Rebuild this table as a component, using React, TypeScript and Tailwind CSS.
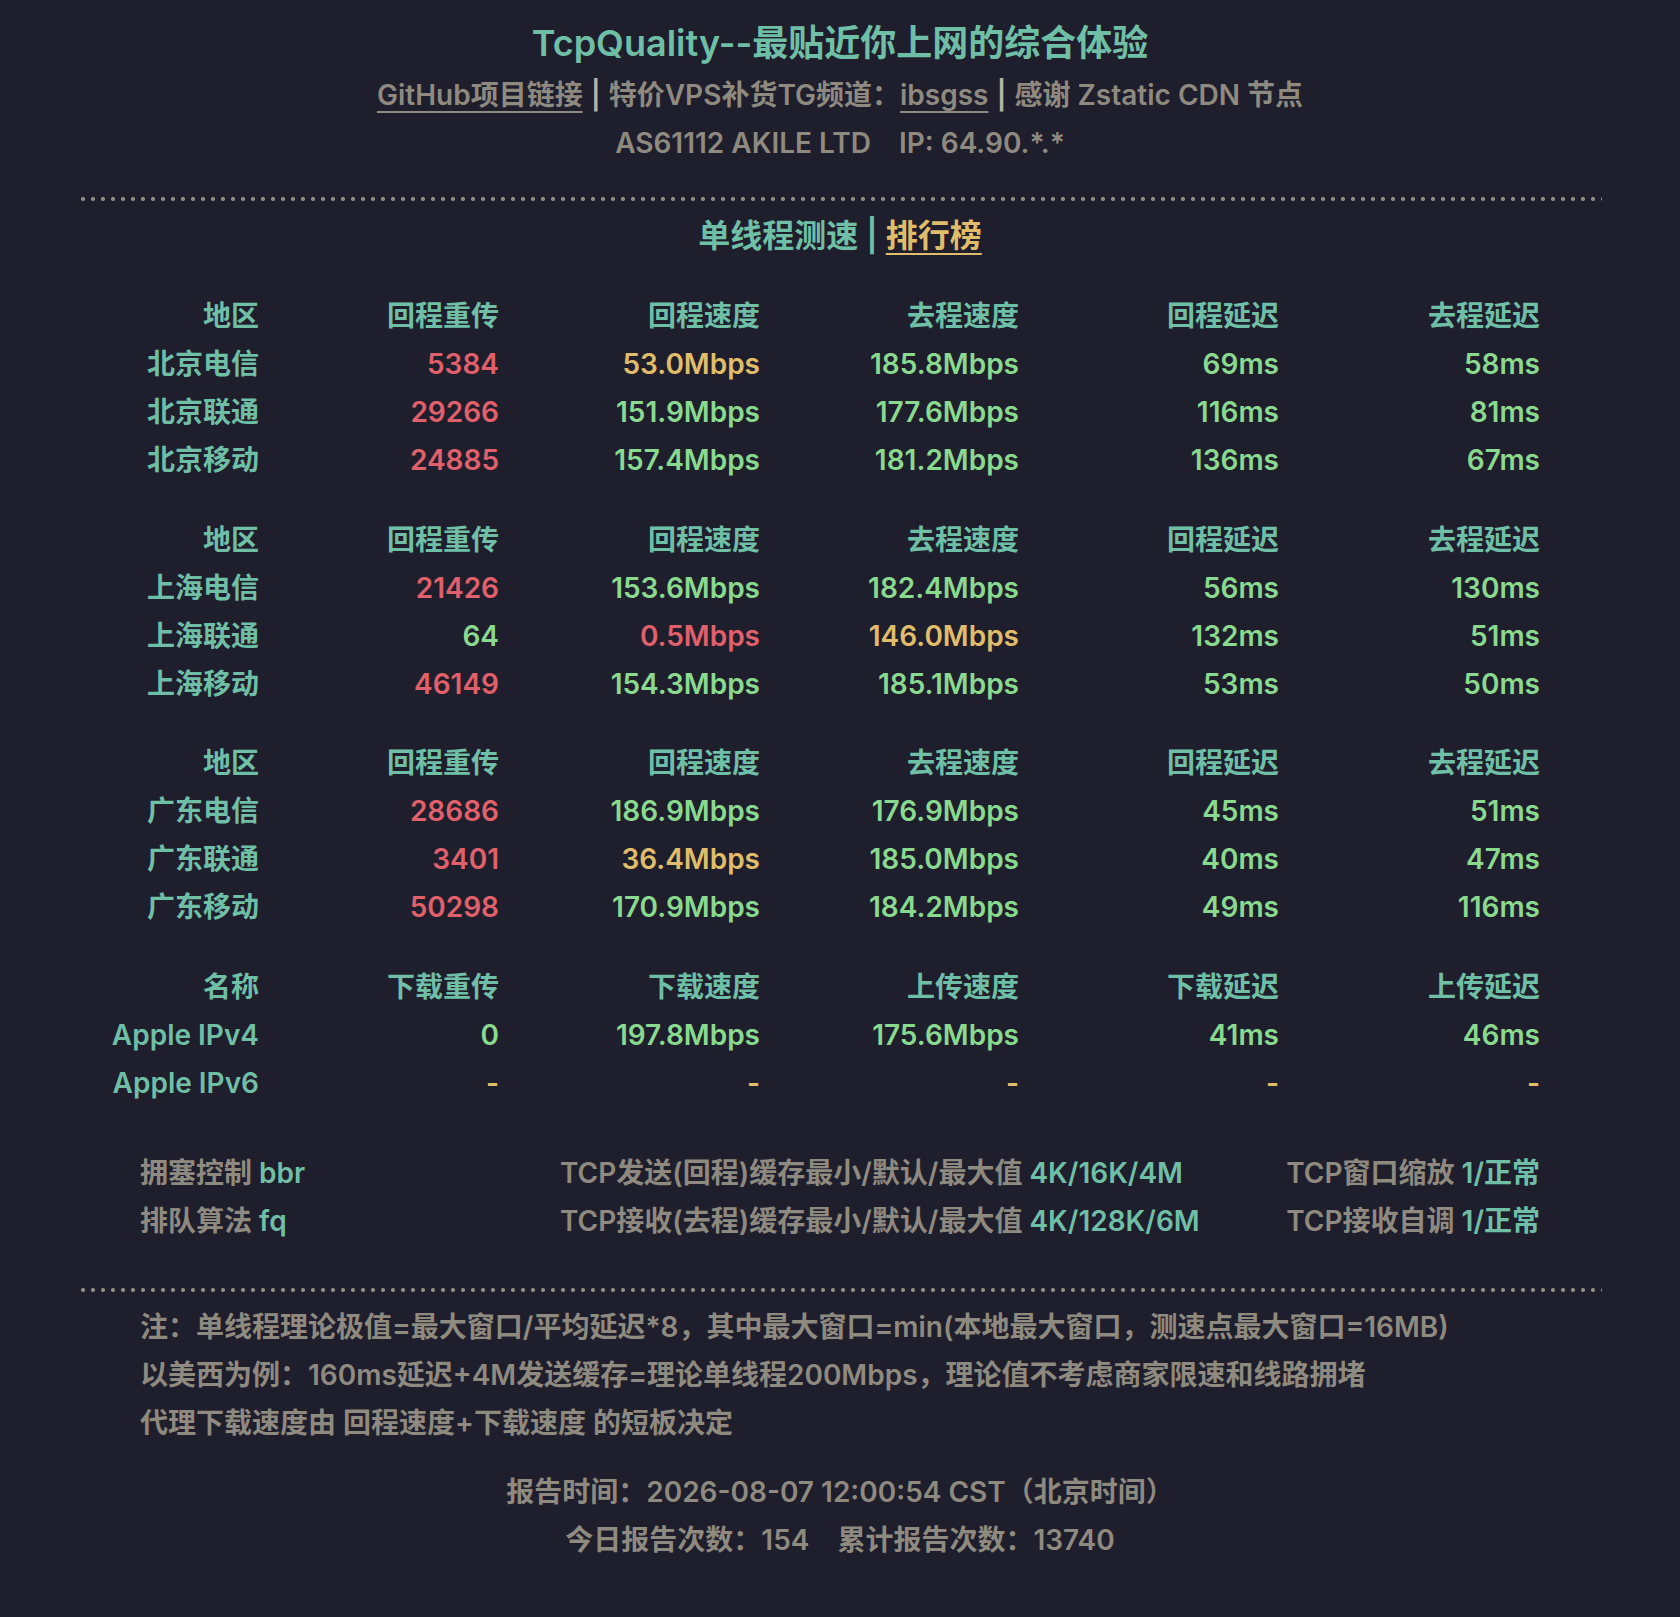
import React from 'react'

type Tone = 'red' | 'green' | 'yellow'

const tone: Record<Tone, string> = {
  red: 'text-[#e0606b]',
  green: 'text-[#89d98f]',
  yellow: 'text-[#e0bd6a]',
}

type Cell = [string, Tone]
type Row = { name: string; cells: Cell[] }
type Block = { head: string[]; rows: Row[] }

const g = (v: string): Cell => [v, 'green']
const r = (v: string): Cell => [v, 'red']
const y = (v: string): Cell => [v, 'yellow']

const regionHead = ['地区', '回程重传', '回程速度', '去程速度', '回程延迟', '去程延迟']

const blocks: Block[] = [
  {
    head: regionHead,
    rows: [
      { name: '北京电信', cells: [r('5384'), y('53.0Mbps'), g('185.8Mbps'), g('69ms'), g('58ms')] },
      { name: '北京联通', cells: [r('29266'), g('151.9Mbps'), g('177.6Mbps'), g('116ms'), g('81ms')] },
      { name: '北京移动', cells: [r('24885'), g('157.4Mbps'), g('181.2Mbps'), g('136ms'), g('67ms')] },
    ],
  },
  {
    head: regionHead,
    rows: [
      { name: '上海电信', cells: [r('21426'), g('153.6Mbps'), g('182.4Mbps'), g('56ms'), g('130ms')] },
      { name: '上海联通', cells: [g('64'), r('0.5Mbps'), y('146.0Mbps'), g('132ms'), g('51ms')] },
      { name: '上海移动', cells: [r('46149'), g('154.3Mbps'), g('185.1Mbps'), g('53ms'), g('50ms')] },
    ],
  },
  {
    head: regionHead,
    rows: [
      { name: '广东电信', cells: [r('28686'), g('186.9Mbps'), g('176.9Mbps'), g('45ms'), g('51ms')] },
      { name: '广东联通', cells: [r('3401'), y('36.4Mbps'), g('185.0Mbps'), g('40ms'), g('47ms')] },
      { name: '广东移动', cells: [r('50298'), g('170.9Mbps'), g('184.2Mbps'), g('49ms'), g('116ms')] },
    ],
  },
  {
    head: ['名称', '下载重传', '下载速度', '上传速度', '下载延迟', '上传延迟'],
    rows: [
      { name: 'Apple IPv4', cells: [g('0'), g('197.8Mbps'), g('175.6Mbps'), g('41ms'), g('46ms')] },
      { name: 'Apple IPv6', cells: [y('-'), y('-'), y('-'), y('-'), y('-')] },
    ],
  },
]

function Dots() {
  return (
    <div className="h-[4px] w-full bg-[radial-gradient(circle,#8f8a80_1.8px,transparent_2.3px)] bg-[length:10px_4px] bg-repeat-x" />
  )
}

export default function App() {
  return (
    <div
      className="min-h-screen bg-[#1f1e2c] font-semibold text-[#8f8a80]"
      style={{ fontFamily: 'Inter, "Noto Sans CJK SC", sans-serif' }}
    >
      <div className="mx-auto w-[1524px] pt-[15px]">
        <h1 className="text-center text-[36px] leading-[56px] text-[#6fbfa7]">
          TcpQuality--最贴近你上网的综合体验
        </h1>
        <p className="text-center text-[28px] leading-[48px]">
          <span className="underline decoration-2 underline-offset-[6px]">GitHub项目链接</span>
          <span className="mx-[8px] text-[#b8b2a8]">|</span>
          特价VPS补货TG频道：<span className="underline decoration-2 underline-offset-[6px]">ibsgss</span>
          <span className="mx-[8px] text-[#b8b2a8]">|</span>
          感谢 Zstatic CDN 节点
        </p>
        <p className="text-center text-[28px] leading-[48px]">
          AS61112 AKILE LTD<span className="ml-[28px]">IP: 64.90.*.*</span>
        </p>

        <div className="mt-[30px]">
          <Dots />
        </div>

        <h2 className="mt-[11px] text-center text-[32px] leading-[48px] text-[#6fbfa7]">
          单线程测速 <span>|</span>{' '}
          <span className="text-[#e0bd6a] underline decoration-2 underline-offset-[6px]">排行榜</span>
        </h2>

        <div className="mt-[32px] flex flex-col gap-[31.5px]">
          {blocks.map((b, bi) => (
            <div
              key={bi}
              className="grid grid-cols-[181px_240px_261px_259px_260px_261px] text-right text-[28px] leading-[48px]"
            >
              {b.head.map((h) => (
                <div key={h} className="text-[#6fbfa7]">
                  {h}
                </div>
              ))}
              {b.rows.map((row) => (
                <React.Fragment key={row.name}>
                  <div className="whitespace-nowrap text-[#6fbfa7]">{row.name}</div>
                  {row.cells.map(([v, t], i) => (
                    <div key={i} className={tone[t]}>
                      {v}
                    </div>
                  ))}
                </React.Fragment>
              ))}
            </div>
          ))}
        </div>

        <div className="mx-auto mt-[42px] grid w-[1400px] grid-cols-[420px_1fr_auto] text-[28px] leading-[48px]">
          <div>
            拥塞控制 <span className="text-[#6fbfa7]">bbr</span>
          </div>
          <div>
            TCP发送(回程)缓存最小/默认/最大值 <span className="text-[#6fbfa7]">4K/16K/4M</span>
          </div>
          <div>
            TCP窗口缩放 <span className="text-[#6fbfa7]">1/正常</span>
          </div>
          <div>
            排队算法 <span className="text-[#6fbfa7]">fq</span>
          </div>
          <div>
            TCP接收(去程)缓存最小/默认/最大值 <span className="text-[#6fbfa7]">4K/128K/6M</span>
          </div>
          <div>
            TCP接收自调 <span className="text-[#6fbfa7]">1/正常</span>
          </div>
        </div>

        <div className="mt-[43px]">
          <Dots />
        </div>

        <div className="mx-auto mt-[11px] w-[1400px] text-[28px] leading-[48px]">
          <p>注：单线程理论极值=最大窗口/平均延迟*8，其中最大窗口=min(本地最大窗口，测速点最大窗口=16MB)</p>
          <p>以美西为例：160ms延迟+4M发送缓存=理论单线程200Mbps，理论值不考虑商家限速和线路拥堵</p>
          <p>代理下载速度由 回程速度+下载速度 的短板决定</p>
        </div>

        <div className="mt-[21px] pb-[40px] text-center text-[28px] leading-[48px]">
          <p>报告时间：2026-08-07 12:00:54 CST（北京时间）</p>
          <p>
            今日报告次数：154<span className="ml-[28px]">累计报告次数：13740</span>
          </p>
        </div>
      </div>
    </div>
  )
}
